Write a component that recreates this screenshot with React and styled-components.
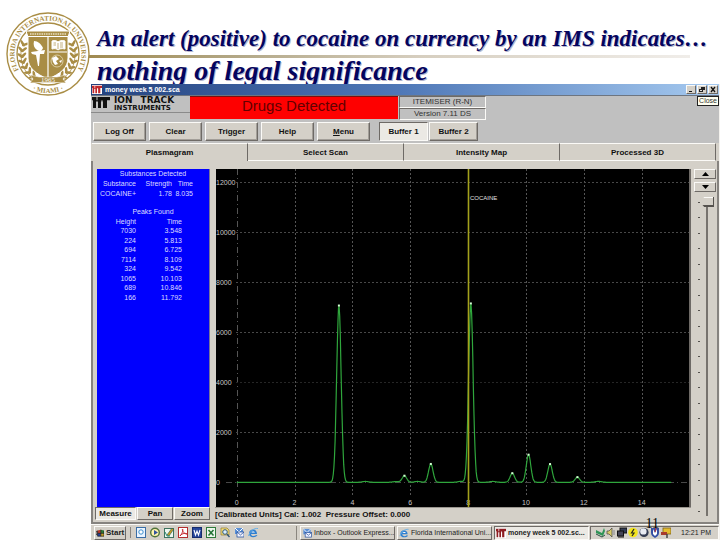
import styled, { createGlobalStyle, css } from "styled-components";

const GlobalStyle = createGlobalStyle`
    * {
        box-sizing: border-box;
    }
    body {
        margin: 0;
        background: #fff;
        font-family: "Liberation Sans", Arial, sans-serif;
    }
    button, input {
        font-family: inherit;
        margin: 0;
    }
`;

const raised = css`
    border: 1px solid;
    border-color: #fbfaf7 #6e6a66 #6e6a66 #fbfaf7;
`;

const sunken = css`
    border: 1px solid;
    border-color: #6e6a66 #fbfaf7 #fbfaf7 #6e6a66;
`;

const Slide = styled.div`
    display: grid;
    grid-template-columns: 91px minmax(0, 1fr);
    min-height: 100vh;
`;

const Side = styled.aside`
    padding: 12px 0 0 6px;
`;

const Seal = styled.svg`
    display: block;
    width: 84px;
    height: 84px;
`;

const Heading = styled.h1`
    margin: 0;
    padding-top: 22px;
    font-family: "Liberation Serif", "Times New Roman", serif;
    font-style: italic;
    font-weight: bold;
    color: #04045e;
    text-shadow: 1px 1px 0 #b4b4cc;
    white-space: nowrap;
`;

const HeadingLine = styled.span`
    display: block;
    padding-left: 6px;
    font-size: ${(p) => (p.$large ? "28px" : "23px")};
    line-height: ${(p) => (p.$large ? "26px" : "33px")};
`;

const Rule = styled.span`
    display: block;
    height: 3px;
    margin: 0 30px 0 -2px;
    background: linear-gradient(to right, #a08a50, #b3a887 25%, #d6cebf 55%, #f0ede9);
`;

/* application window */

const Window = styled.main`
    position: relative;
    display: flex;
    flex-direction: column;
    background: #d4d0c8;
    border-right: 1px solid #f4f2ee;
`;

const TitleBar = styled.div`
    display: flex;
    align-items: center;
    height: 12px;
    padding: 0 1px;
    gap: 3px;
    border-bottom: 1px solid #6d7580;
    background: linear-gradient(to right, #24427f, #5079b8 50%, #a6caf0);
    color: #fff;
    font-size: 7px;
    font-weight: bold;
`;

const TitleText = styled.span`
    flex: 1;
`;

const WindowButtons = styled.div`
    display: flex;
    gap: 1px;
`;

const WindowButton = styled.button`
    ${raised}
    display: flex;
    padding: 0;
    width: 10px;
    height: 9px;
    background: #d4d0c8;

    svg {
        width: 8px;
        height: 7px;
    }
`;

const Tooltip = styled.span`
    position: absolute;
    top: 12px;
    right: 0;
    padding: 0 1px;
    border: 1px solid #222;
    background: #fffff0;
    font-size: 7px;
    line-height: 8px;
    color: #333;
`;

const Banner = styled.header`
    display: flex;
    height: 24px;
    background: #c0c0c0;
`;

const Brand = styled.div`
    display: flex;
    flex-direction: column;
    width: 99px;
`;

const BrandTop = styled.div`
    display: flex;
    gap: 4px;
    padding-left: 1px;
    border-bottom: 1px solid #8a8a8a;
`;

const BrandName = styled.div`
    font-family: "DejaVu Sans", sans-serif;
    font-weight: bold;
    color: #111;
`;

const BrandWord = styled.div`
    display: flex;
    gap: 8px;
    font-size: ${(p) => (p.$small ? "7px" : "9px")};
    line-height: ${(p) => (p.$small ? "7px" : "9px")};
`;

const Alert = styled.div`
    width: 208px;
    margin-bottom: 1px;
    border-top: 1px solid #7a1010;
    background: #fe0000;
    color: #620000;
    font-size: 15px;
    line-height: 18px;
    text-align: center;
`;

const Versions = styled.div`
    display: flex;
    flex-direction: column;
    width: 88px;
    padding-left: 1px;
`;

const Version = styled.div`
    ${sunken}
    flex: 1;
    color: #333;
    font-size: 8px;
    line-height: 10px;
    text-align: center;
`;

const Toolbar = styled.div`
    display: flex;
    gap: 3px;
    padding: 2px;
    background: #c0c0c0;
`;

const ToolGroup = styled.div`
    display: flex;
    gap: ${(p) => (p.$tight ? "1px" : "3px")};
    margin-left: ${(p) => (p.$tight ? "6px" : "0")};
`;

const ToolButton = styled.button`
    ${(p) => (p.$pressed ? sunken : raised)}
    padding: 0;
    width: ${(p) => (p.$narrow ? "49px" : "53px")};
    height: 19px;
    background: ${(p) => (p.$pressed ? "#ebe9e4" : "#d4d0c8")};
    box-shadow: ${(p) => (p.$pressed ? "none" : "inset -1px -1px 0 #a29e98")};
    color: #111;
    font-size: 8px;
    font-weight: bold;
`;

const Tabs = styled.div`
    display: flex;
    padding: 0 3px 0 1px;
    background: #d4d0c8;
`;

const Tab = styled.button`
    flex: 1;
    height: 18px;
    padding: 0;
    border: solid #fbfaf7;
    border-width: 1px 0 ${(p) => (p.$active ? "0" : "1px")};
    border-right: 1px solid #6e6a66;
    background: #d4d0c8;
    color: #111;
    font-size: 8px;
    font-weight: bold;
`;

const Pane = styled.section`
    display: flex;
    gap: 3px;
    padding: 8px 1px 2px 2px;
    border: solid #86837f;
    border-width: 0 2px 2px;
`;

const PaneMain = styled.div`
    flex: 1;
    min-width: 0;
`;

const Panels = styled.div`
    display: flex;
    gap: 6px;
    padding-left: 2px;
`;

const Results = styled.div`
    flex: none;
    width: 113px;
    background: #0000fe;
    border-right: 1px solid #77749a;
    color: #dcdcff;
    font-size: 7px;
    line-height: 9px;
`;

const ResultsTitle = styled.h2`
    margin: 0;
    font-size: 7px;
    line-height: 10px;
    font-weight: normal;
    text-align: center;
`;

const ResultsTable = styled.table`
    border-collapse: collapse;
    table-layout: fixed;
    width: ${(p) => p.$width}px;
    height: ${(p) => p.$height}px;
    margin-bottom: 9px;

    th, td {
        padding: 0;
        font-weight: normal;
        text-align: right;
        white-space: nowrap;
    }
    th:first-child {
        width: 39px;
    }
    th:last-child:nth-child(3) {
        width: 21px;
    }
`;

const ChartFrame = styled.div`
    flex: 1;
    min-width: 0;
    border-right: 2px solid #6e6a66;
    background: #000;
`;

const ChartSvg = styled.svg`
    display: block;
    width: 100%;
    height: auto;
    font-size: 7px;
    fill: #c8c8c8;
`;

const BottomBar = styled.div`
    display: flex;
    gap: 1px;
    height: 13px;
`;

const ModeButton = styled.button`
    ${(p) => (p.$pressed ? sunken : raised)}
    padding: 0;
    width: ${(p) => (p.$pressed ? "41px" : "36px")};
    background: ${(p) => (p.$pressed ? "#ebe9e4" : "#d4d0c8")};
    color: #111;
    font-size: 8px;
    line-height: 11px;
    font-weight: bold;
`;

const Status = styled.div`
    flex: 1;
    margin-left: 4px;
    border-top: 1px solid #9a968f;
    color: #111;
    font-size: 8px;
    line-height: 13px;
    font-weight: bold;
    white-space: pre;
`;

const Scale = styled.div`
    display: flex;
    flex-direction: column;
    gap: 3px;
    width: 22px;
`;

const StepButton = styled.button`
    ${raised}
    display: flex;
    align-items: center;
    justify-content: center;
    padding: 0;
    height: 10px;
    background: #d4d0c8;

    svg {
        width: 7px;
        height: 4px;
    }
`;

const SliderRow = styled.div`
    display: flex;
    flex: 1;
    padding: 2px 2px 4px 4px;
`;

const Ticks = styled.div`
    display: flex;
    flex-direction: column;
    justify-content: space-between;
    padding: 5px 0 4px;

    i {
        width: 2px;
        height: 1px;
        background: #55524e;
    }
`;

const Slider = styled.input`
    appearance: none;
    writing-mode: vertical-lr;
    width: 14px;
    height: auto;
    background: linear-gradient(#77736e, #77736e) center / 2px 100% no-repeat;

    &::-webkit-slider-thumb {
        appearance: none;
        width: 14px;
        height: 10px;
        border: solid #55524e;
        border-width: 0 1px 2px 0;
        background: linear-gradient(#fbfaf7 1px, #d4d0c8 1px);
        clip-path: polygon(0 50%, 30% 0, 100% 0, 100% 100%, 30% 100%);
    }
`;

/* taskbar */

const Taskbar = styled.footer`
    display: flex;
    align-items: center;
    height: 16px;
    padding-left: 3px;
    border-top: 1px solid #fbfaf7;
    font-size: 7px;
    color: #222;
`;

const TaskButton = styled.button`
    ${(p) => (p.$pressed ? sunken : raised)}
    display: flex;
    align-items: center;
    gap: 2px;
    flex: ${(p) => (p.$start ? "none" : "0 1 95px")};
    width: ${(p) => (p.$start ? "32px" : "auto")};
    height: 14px;
    padding: 0 1px;
    overflow: hidden;
    background: ${(p) => (p.$pressed ? "#ebe9e4" : "#d4d0c8")};
    color: #222;
    font-size: ${(p) => (p.$start ? "8px" : "7px")};
    font-weight: ${(p) => (p.$pressed || p.$start ? "bold" : "normal")};
    white-space: nowrap;

    svg {
        flex: none;
        width: ${(p) => (p.$start ? "8px" : "10px")};
        height: 10px;
    }
`;

const QuickLaunch = styled.div`
    display: flex;
    gap: 4px;
    margin: 0 38px 0 4px;
    padding-left: 5px;
    border-left: 1px solid #8a867f;
`;

const IconButton = styled.button`
    display: flex;
    padding: 0;
    border: 0;
    background: none;

    svg {
        width: 10px;
        height: 11px;
    }
`;

const Tasks = styled.div`
    display: flex;
    flex: 1;
    gap: 2px;
    min-width: 0;
    padding-left: 3px;
    border-left: 1px solid #8a867f;
`;

const Tray = styled.div`
    ${sunken}
    display: flex;
    align-items: center;
    gap: 1px;
    height: 14px;
    padding: 0 7px 0 4px;

    svg {
        width: 10px;
        height: 11px;
    }
`;

const Clock = styled.time`
    padding-left: 9px;
    white-space: nowrap;
`;

const PageNumber = styled.span`
    position: absolute;
    right: 60px;
    bottom: 8px;
    font-family: "Liberation Serif", "Times New Roman", serif;
    font-size: 14px;
    line-height: 16px;
    color: #000;
`;

const GOLD = "#a98d45";

const Laurel = () => (
    <g fill={GOLD}>
        {[0, 1, 2, 3, 4, 5, 6].map((i) => {
            const a = ((102 + i * 13) * Math.PI) / 180;
            const x = 42 + 26 * Math.cos(a + 0.35);
            const y = 42 + 26 * Math.sin(a + 0.35);
            const turn = 102 + i * 13 + 20;
            return (
                <g key={i} transform={`translate(${x} ${y}) rotate(${turn})`}>
                    <ellipse cx="2" cy="0" rx="3.6" ry="1.3" transform="rotate(40)" />
                    <ellipse cx="-2" cy="0" rx="3.6" ry="1.3" transform="rotate(-40)" />
                </g>
            );
        })}
        <path d="M32 68C20 64 14 54 15 38" fill="none" stroke={GOLD} strokeWidth="0.8" />
    </g>
);

const UniversitySeal = () => (
    <Seal viewBox="0 0 84 84" role="img" aria-label="Florida International University seal">
        <defs>
            <path id="ringTop" d="M18.3 65.7A33.5 33.5 0 1 1 65.7 65.7" />
            <path id="ringBottom" d="M14.4 69.6A39 39 0 0 0 69.6 69.6" />
        </defs>
        <circle cx="42" cy="42" r="41" fill="#fff" stroke={GOLD} strokeWidth="1.4" />
        <circle cx="42" cy="42" r="31" fill="none" stroke={GOLD} strokeWidth="1.3" />
        <g fill={GOLD} fontFamily="Liberation Serif, serif" fontWeight="bold" textAnchor="middle">
            <text fontSize="7">
                <textPath href="#ringTop" startOffset="50%">FLORIDA INTERNATIONAL UNIVERSITY</textPath>
            </text>
            <text fontSize="7">
                <textPath href="#ringBottom" startOffset="50%">· MIAMI ·</textPath>
            </text>
        </g>
        <Laurel />
        <g transform="matrix(-1 0 0 1 84 0)">
            <Laurel />
        </g>
        <path d="M20 19H64L62 25V46C62 56 54 62 42 67C30 62 22 56 22 46V25Z" fill={GOLD} stroke="#fff" strokeWidth="1" />
        <path d="M22 24.5H62M42 25V65M43 40H61" stroke="#fff" strokeWidth="1.2" fill="none" />
        <path d="M24 22H60" stroke="#e9dfc2" strokeWidth="1.6" strokeDasharray="1.5 0.8" />
        <path d="M28 29C32 29 35 32 37 36C36 39 33 40 31 38C28 36 27 33 28 29ZM25 40L39 38L38 42H34L33 54H32L30 43L26 42Z" fill="#fff" />
        <path d="M46 29C49 28 51 29 52 30C53 29 56 28 59 29V37C56 36 53 37 52 38C51 37 49 36 46 37Z" fill="#fff" stroke="#fff" />
        <path d="M52 31V37M47.5 31H50M47.5 33H50M54 31H57M54 33H57M54 35H57" stroke={GOLD} strokeWidth="0.7" />
        <circle cx="51" cy="49" r="6" fill={GOLD} stroke="#e5d9b6" strokeWidth="0.8" />
        <path d="M46 46L50 44L53 47L50 49L52 52L49 53L47 50ZM53 49L56 48L55 51Z" fill="#fff" />
        <path d="M24 63L33 65H51L60 63L57 67L60 71L51 70.5H33L24 71L27 67Z" fill={GOLD} stroke="#fff" strokeWidth="0.5" />
        <text x="42" y="70" fontSize="7" fill="#fff" textAnchor="middle" fontFamily="Liberation Serif, serif">1965</text>
    </Seal>
);

/* "IT" monogram of the instrument maker */
const Monogram = ({ w, h, color, back }) => (
    <svg viewBox="0 0 18 12" width={w} height={h} preserveAspectRatio="none" aria-hidden="true">
        <rect width="18" height="12" fill={back} />
        <path d="M0 1H18V4H15V11H11V5H9V11H6V5H4V11H1V4H0Z" fill={color} />
        <path d="M5 1V4M10 4V11" stroke={back} strokeWidth="1" />
    </svg>
);

const WindowsFlag = () => (
    <svg viewBox="0 0 10 10" aria-hidden="true">
        <path d="M0 3H2M0 5H2M0 7H2" stroke="#222" />
        <path d="M2 2L6 1V5L2 5.5Z" fill="#b8382a" />
        <path d="M6 1L10 2V5.5L6 5Z" fill="#2c7a35" />
        <path d="M2 5.5L6 5V9L2 9Z" fill="#26409c" />
        <path d="M6 5L10 5.5V9L6 9Z" fill="#c9a227" />
        <path d="M2 2V9M6 1V9M10 2V9M2 9H10M2 5.5H10" stroke="#111" strokeWidth="0.8" />
    </svg>
);

const ExplorerE = () => (
    <>
        <path d="M9 7H3C3 9 6 10 8 8L9.5 8.5C7 11 1 11 1 6.5C1 1 9 1 9 7Z" fill="#2f7fd0" />
        <path d="M3.3 5.5H7C6.5 4 4 4 3.3 5.5Z" fill="#fff" />
        <path d="M0.5 9C2 4 6 1 10 1.5" fill="none" stroke="#68b0e8" />
    </>
);

const OutlookMail = () => (
    <>
        <rect x="1" y="1" width="8" height="6" fill="#5a8fd6" />
        <path d="M1 1L5 5L9 1" stroke="#fff" fill="none" />
        <rect x="3" y="5" width="7" height="5" fill="#f4f4ff" stroke="#2b56a0" strokeWidth="0.8" />
        <path d="M3 5L6.5 8L10 5" stroke="#2b56a0" strokeWidth="0.8" fill="none" />
    </>
);

const quickIcons = [
    ["Show Desktop", <><rect x="0.5" y="0.5" width="9" height="10" fill="#eaf4ff" stroke="#3b6ea5" /><circle cx="5" cy="5" r="2.2" fill="#fff" stroke="#3b8fd0" /></>],
    ["Media Player", <><circle cx="5" cy="5.5" r="4.3" fill="#fff3b0" stroke="#50733a" strokeWidth="1.4" /><path d="M4 3L8 5.5L4 8Z" fill="#31519c" /></>],
    ["Editor", <><rect x="0.5" y="1.5" width="9" height="9" fill="#eef7ef" stroke="#3d7360" /><path d="M3 8L8 1L9.5 2.5L5 9Z" fill="#c79a21" stroke="#235c52" strokeWidth="0.6" /><path d="M1 5L3 9H6" fill="none" stroke="#2a8a73" /></>],
    ["Acrobat", <><rect x="0.5" y="0.5" width="9" height="10" fill="#fff" stroke="#b22d2d" /><path d="M2 9C5 6 5 2 4.5 2C4 2 5 7 9 7C7 5.5 3 7 2 9Z" fill="none" stroke="#c4262a" /></>],
    ["Word", <><rect x="0.5" y="0.5" width="9" height="10" fill="#26469b" stroke="#172c6b" /><path d="M2 3L3.5 8L5 4L6.5 8L8 3" fill="none" stroke="#fff" strokeWidth="1.1" /></>],
    ["Excel", <><rect x="0.5" y="0.5" width="9" height="10" fill="#eef7ee" stroke="#2e7a3a" /><path d="M2.5 3L7.5 8.5M7.5 3L2.5 8.5" stroke="#237335" strokeWidth="1.6" /></>],
    ["Search", <><path d="M1 1H7L9 3V8H1Z" fill="#f5df7d" stroke="#927d2a" strokeWidth="0.7" /><circle cx="5" cy="5" r="2.3" fill="#d8efff" stroke="#31567a" /><path d="M7 7L9.5 10" stroke="#31567a" strokeWidth="1.4" /></>],
    ["Outlook Express", <OutlookMail />],
    ["Internet Explorer", <ExplorerE />],
];

const trayIcons = [
    <><path d="M1 3L7 6L9 1L10 4L8 9L1 6Z" fill="#2f9457" /><path d="M1 7L7 10L10 8" stroke="#2b4d40" fill="none" /></>,
    <><path d="M1 4H3L6 1V10L3 7H1Z" fill="#d8cc68" stroke="#444" strokeWidth="0.7" /><path d="M8 3V8" stroke="#888" /></>,
    <><rect x="3" y="1" width="7" height="5" fill="#333c55" stroke="#111" /><rect x="0.5" y="4" width="6" height="5" fill="#445" stroke="#111" /><path d="M1 10H7" stroke="#111" /></>,
    <><circle cx="5" cy="5.5" r="4.8" fill="#f2e41c" /><path d="M6 2L3.5 6H6L4 9" fill="none" stroke="#222" strokeWidth="1.2" /></>,
    <><circle cx="5" cy="5.5" r="4.6" fill="#333b52" /><circle cx="4.4" cy="4.4" r="3.2" fill="#e8ebf2" /></>,
    <><path d="M1 1H9V6C9 8 7 10 5 11C3 10 1 8 1 6Z" fill="#3550a4" /><path d="M3 2L5 6L7 2V7L5 9L3 7Z" fill="#fff" /><path d="M6 1L5 5" stroke="#c33" /></>,
    <><rect x="2" y="1" width="8" height="6" fill="#e5bd2f" stroke="#7c621a" strokeWidth="0.8" /><path d="M0 5H6V8H0Z" fill="#a83b2c" /><path d="M6 7V11" stroke="#444" strokeWidth="1.5" /></>,
];

const Icon = ({ children }) => (
    <svg viewBox="0 0 10 11" aria-hidden="true">{children}</svg>
);

const peaks = [
    { height: 7030, time: "3.548" },
    { height: 224, time: "5.813" },
    { height: 694, time: "6.725" },
    { height: 7114, time: "8.109" },
    { height: 324, time: "9.542" },
    { height: 1065, time: "10.103" },
    { height: 689, time: "10.846" },
    { height: 166, time: "11.792" },
];

const px = (t) => 20.7 + t * 28.93;
const py = (v) => 313.3 - v * 0.025;

const bumps = [[4.45, 35], [5.5, 30], [6.25, 35], [7.75, 40], [8.85, 35], [12.5, 40]];
const signal = (t) => {
    const bell = (at, h, s) => h * Math.exp(-((t - at) ** 2) / (2 * s * s));
    return (
        peaks.reduce((sum, p) => sum + bell(p.time - 0.015, p.height + 40, 0.078), 0) +
        bumps.reduce((sum, [at, h]) => sum + bell(at, h, 0.1), 0)
    );
};

const trace = Array.from({ length: 752 }, (_, i) => {
    const t = i * 0.02;
    return `${i ? "L" : "M"}${px(t).toFixed(1)} ${py(signal(t)).toFixed(1)}`;
}).join("");

const Plasmagram = () => (
    <ChartSvg viewBox="0 0 473 338" role="img" aria-label="Plasmagram">
        {[0, 2, 4, 6, 8, 10, 12, 14].map((t) => (
            <g key={t}>
                <path d={`M${Math.round(px(t)) + 0.5} 0V328`} stroke="#555" strokeDasharray={t ? "2 2" : "6 3 1 3"} />
                <text x={px(t)} y="336" textAnchor="middle">{t}</text>
            </g>
        ))}
        {[0, 2000, 4000, 6000, 8000, 10000, 12000].map((v) => (
            <g key={v}>
                <path
                    d={`M${v ? 20 : 10} ${Math.round(py(v)) + 0.5}H473`}
                    stroke={v === 4000 ? "#262626" : "#484848"}
                    strokeDasharray={v ? "2 2" : "6 3 1 3"}
                />
                <text x="0" y={py(v) + 3}>{v}</text>
            </g>
        ))}
        <path d={trace} fill="none" stroke="#2fa63c" strokeWidth="1.2" />
        <path d="M252.5 0V338" stroke="#a3a11c" strokeWidth="1.6" />
        {peaks.map((p) => (
            <rect key={p.time} x={px(p.time - 0.015) - 1} y={py(p.height + 40) - 1} width="2" height="2" fill="#d4ffd4" />
        ))}
        <text x="254" y="31" fontSize="6" fill="#e0e0e0">COCAINE</text>
    </ChartSvg>
);

const App = () => {
    return <Slide>
        <GlobalStyle />
        <Side>
            <UniversitySeal />
        </Side>
        <div>
            <Heading>
                <HeadingLine>An alert (positive) to cocaine on currency by an IMS indicates…</HeadingLine>
                <Rule />
                <HeadingLine $large>nothing of legal significance</HeadingLine>
            </Heading>
            <Window>
                <TitleBar>
                    <Monogram w={10} h={9} color="#c0282c" back="#fff" />
                    <TitleText>money week 5 002.sca</TitleText>
                    <WindowButtons>
                        <WindowButton aria-label="Minimize">
                            <svg viewBox="0 0 8 7"><path d="M2 5.5H5" stroke="#111" /></svg>
                        </WindowButton>
                        <WindowButton aria-label="Restore">
                            <svg viewBox="0 0 8 7"><path d="M3 1H7V4H5V6H1V3H3Z" fill="#222" /><path d="M2 4.5H4" stroke="#ddd" /></svg>
                        </WindowButton>
                        <WindowButton aria-label="Close">
                            <svg viewBox="0 0 8 7"><path d="M2 1L6 6M6 1L2 6" stroke="#111" strokeWidth="1.3" /></svg>
                        </WindowButton>
                    </WindowButtons>
                </TitleBar>
                <Tooltip role="tooltip">Close</Tooltip>
                <Banner>
                    <Brand>
                        <BrandTop>
                            <Monogram w={18} h={13} color="#111" back="#c0c0c0" />
                            <BrandName>
                                <BrandWord><span>ION</span><span>TRACK</span></BrandWord>
                                <BrandWord $small>INSTRUMENTS</BrandWord>
                            </BrandName>
                        </BrandTop>
                    </Brand>
                    <Alert role="alert">Drugs Detected</Alert>
                    <Versions>
                        <Version>ITEMISER (R-N)</Version>
                        <Version>Version 7.11 DS</Version>
                    </Versions>
                </Banner>
                <Toolbar>
                    <ToolGroup>
                        <ToolButton>Log Off</ToolButton>
                        <ToolButton>Clear</ToolButton>
                        <ToolButton>Trigger</ToolButton>
                        <ToolButton>Help</ToolButton>
                        <ToolButton><u>M</u>enu</ToolButton>
                    </ToolGroup>
                    <ToolGroup $tight>
                        <ToolButton $narrow $pressed aria-pressed="true">Buffer 1</ToolButton>
                        <ToolButton $narrow>Buffer 2</ToolButton>
                    </ToolGroup>
                </Toolbar>
                <Tabs role="tablist">
                    <Tab role="tab" aria-selected="true" $active>Plasmagram</Tab>
                    <Tab role="tab">Select Scan</Tab>
                    <Tab role="tab">Intensity Map</Tab>
                    <Tab role="tab">Processed 3D</Tab>
                </Tabs>
                <Pane>
                    <PaneMain>
                        <Panels>
                            <Results>
                                <ResultsTitle id="substances">Substances Detected</ResultsTitle>
                                <ResultsTable $width={96} $height={19} aria-labelledby="substances">
                                    <thead>
                                        <tr><th>Substance</th><th>Strength</th><th>Time</th></tr>
                                    </thead>
                                    <tbody>
                                        <tr><td>COCAINE+</td><td>1.78</td><td>8.035</td></tr>
                                    </tbody>
                                </ResultsTable>
                                <ResultsTitle id="peaks">Peaks Found</ResultsTitle>
                                <ResultsTable $width={85} $height={85} aria-labelledby="peaks">
                                    <thead>
                                        <tr><th>Height</th><th>Time</th></tr>
                                    </thead>
                                    <tbody>
                                        {peaks.map((p) => (
                                            <tr key={p.time}><td>{p.height}</td><td>{p.time}</td></tr>
                                        ))}
                                    </tbody>
                                </ResultsTable>
                            </Results>
                            <ChartFrame>
                                <Plasmagram />
                            </ChartFrame>
                        </Panels>
                        <BottomBar>
                            <ModeButton $pressed aria-pressed="true">Measure</ModeButton>
                            <ModeButton>Pan</ModeButton>
                            <ModeButton>Zoom</ModeButton>
                            <Status>{"[Calibrated Units] Cal: 1.002  Pressure Offset: 0.000"}</Status>
                        </BottomBar>
                    </PaneMain>
                    <Scale>
                        <StepButton aria-label="Scale up">
                            <svg viewBox="0 0 7 4"><path d="M3.5 0L7 4H0Z" /></svg>
                        </StepButton>
                        <StepButton aria-label="Scale down">
                            <svg viewBox="0 0 7 4"><path d="M3.5 4L7 0H0Z" /></svg>
                        </StepButton>
                        <SliderRow>
                            <Ticks>
                                {Array.from({ length: 21 }, (_, i) => <i key={i} />)}
                            </Ticks>
                            <Slider type="range" min="0" max="20" defaultValue="0" aria-label="Vertical scale" />
                        </SliderRow>
                    </Scale>
                </Pane>
                <Taskbar>
                    <TaskButton $start><WindowsFlag />Start</TaskButton>
                    <QuickLaunch>
                        {quickIcons.map(([label, drawing]) => (
                            <IconButton key={label} aria-label={label}><Icon>{drawing}</Icon></IconButton>
                        ))}
                    </QuickLaunch>
                    <Tasks>
                        <TaskButton><Icon><OutlookMail /></Icon>Inbox - Outlook Express...</TaskButton>
                        <TaskButton><Icon><ExplorerE /></Icon>Florida International Uni...</TaskButton>
                        <TaskButton $pressed><Monogram w={10} h={10} color="#8d1c20" back="#fff" />money week 5 002.sc...</TaskButton>
                    </Tasks>
                    <Tray>
                        {trayIcons.map((drawing, i) => <Icon key={i}>{drawing}</Icon>)}
                        <Clock>12:21 PM</Clock>
                    </Tray>
                </Taskbar>
                <PageNumber>11</PageNumber>
            </Window>
        </div>
    </Slide>
}

export default App;
